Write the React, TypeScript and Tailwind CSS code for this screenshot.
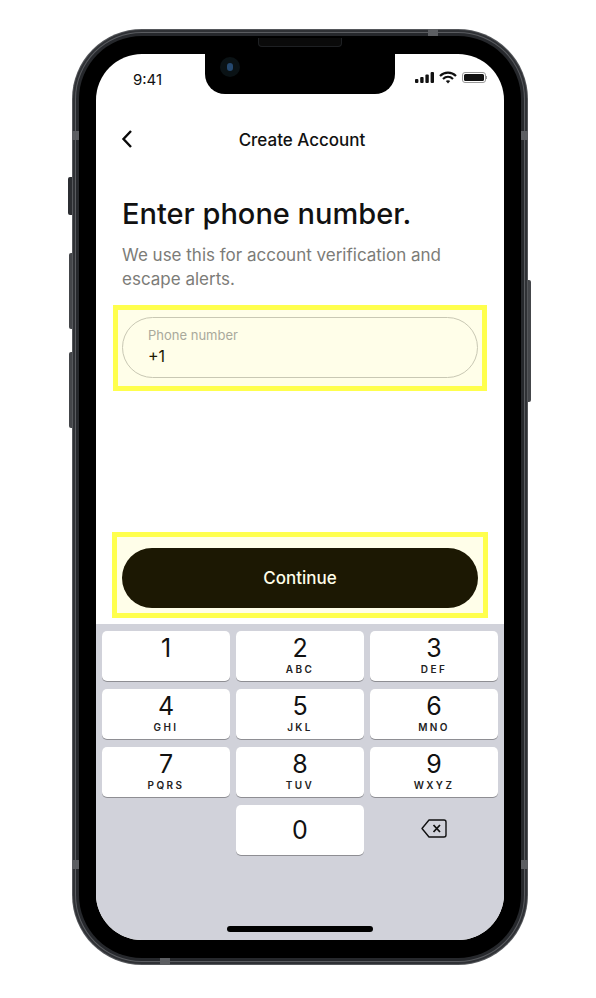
const keys = [
  ['1', ''],
  ['2', 'ABC'],
  ['3', 'DEF'],
  ['4', 'GHI'],
  ['5', 'JKL'],
  ['6', 'MNO'],
  ['7', 'PQRS'],
  ['8', 'TUV'],
  ['9', 'WXYZ'],
];

const Key = ({ digit, letters }: { digit: string; letters: string }) => (
  <div className="h-[50px] rounded-[5px] bg-white shadow-[0_1px_0_#8e8e93] flex flex-col items-center pt-[3px]">
    <span className="text-[25px] leading-[29px] text-[#111]">{digit}</span>
    {letters && (
      <span className="mt-[1px] text-[10px] leading-[11px] font-semibold tracking-[2.4px] text-[#222] font-['Inter',sans-serif]">
        {letters}
      </span>
    )}
  </div>
);

const StatusIcons = () => (
  <svg width="72" height="14" viewBox="0 0 72 14">
    <rect x="0" y="8" width="3.4" height="4" rx="1" fill="#111" />
    <rect x="5.2" y="6" width="3.4" height="6" rx="1" fill="#111" />
    <rect x="10.4" y="3.5" width="3.4" height="8.5" rx="1" fill="#111" />
    <rect x="15.6" y="1" width="3.4" height="11" rx="1" fill="#111" />
    <path d="M25 5 C29.5 0.5 36.5 0.5 41 5 M28 8 C31 5.2 35 5.2 38 8" fill="none" stroke="#111" strokeWidth="2.2" />
    <path d="M30.8 10 C32 8.9 34 8.9 35.2 10 L33 12.4 Z" fill="#111" />
    <rect x="47.5" y="1.5" width="23" height="10" rx="2.5" fill="none" stroke="#999" strokeWidth="1" />
    <rect x="49" y="3" width="20" height="7" rx="1.5" fill="#111" />
    <rect x="71" y="5" width="1" height="3" fill="#999" />
  </svg>
);

export default function App() {
  return (
    <div className="w-[596px] h-[998px] bg-white overflow-hidden pt-[29px] pl-[72px] font-['Inter',sans-serif]">
      <div className="relative w-[456px] h-[936px]">
        {/* side buttons */}
        <div className="absolute left-[-4px] top-[148px] w-[5px] h-[38px] rounded-l-[2px] bg-[#2c2e32]" />
        <div className="absolute left-[-3px] top-[224px] w-[4px] h-[76px] rounded-l-[2px] bg-[#44464a]" />
        <div className="absolute left-[-3px] top-[323px] w-[4px] h-[76px] rounded-l-[2px] bg-[#44464a]" />
        <div className="absolute right-[-3px] top-[251px] w-[4px] h-[122px] rounded-r-[2px] bg-[#44464a]" />

        {/* frame */}
        <div className="relative h-full rounded-[70px] bg-[#55575b] p-[1px]">
          <div className="h-full rounded-[69px] bg-[#2f3135] p-[2px]">
            <div className="h-full rounded-[67px] bg-[#5a5c60] p-[1px]">
              <div className="h-full rounded-[66px] bg-[#26282c] p-[3px]">
                <div className="h-full rounded-[63px] bg-black px-[17px] py-[18px]">
                  {/* screen */}
                  <div className="relative h-full rounded-[46px] overflow-hidden bg-white flex flex-col">
                    {/* notch */}
                    <div className="absolute left-[109px] top-0 w-[190px] h-[40px] bg-black rounded-b-[20px]" />
                    <div className="absolute left-[124px] top-[3px] w-[20px] h-[20px] rounded-full bg-[#0a1215] flex items-center justify-center">
                      <div className="w-[6px] h-[8px] rounded-full bg-[#25486e]" />
                    </div>

                    {/* status bar */}
                    <div className="h-[48px] shrink-0 flex items-start justify-between pl-[37px] pr-[17px] pt-[17px]">
                      <span className="text-[15px] leading-[18px] text-[#111]">9:41</span>
                      <StatusIcons />
                    </div>

                    {/* nav */}
                    <div className="relative h-[74px] shrink-0 flex items-center justify-center pl-[4px] pt-[3px]">
                      <svg
                        className="absolute left-[24px] top-[27px]"
                        width="14"
                        height="20"
                        viewBox="0 0 14 20"
                        fill="none"
                        stroke="#0a0a0a"
                        strokeWidth="2.4"
                      >
                        <path d="M11 2 L3.5 10 L11 18" />
                      </svg>
                      <span className="text-[17px] font-medium text-[#111]">Create Account</span>
                    </div>

                    {/* copy */}
                    <div className="px-[26px] pt-[20px] shrink-0">
                      <h1 className="text-[29px] leading-[36px] font-medium text-[#111]">Enter phone number.</h1>
                      <p className="mt-[11px] text-[17px] leading-[24px] text-[#7c7c78]">
                        We use this for account verification and escape alerts.
                      </p>
                    </div>

                    {/* phone input */}
                    <div className="mx-[17px] mt-[14px] h-[86px] shrink-0 border-[5px] border-[#ffff4d] bg-[#fffee9] px-[4px] pt-[7px]">
                      <div className="h-[61px] rounded-full border border-[#c9c8b4] pl-[25px] pt-[9px]">
                        <div className="text-[13px] leading-[17px] text-[#a9a99c]">Phone number</div>
                        <div className="text-[16px] leading-[22px] mt-[1px] text-[#1c1803]">+1</div>
                      </div>
                    </div>

                    {/* continue */}
                    <div className="mx-[16px] mt-[141px] h-[86px] shrink-0 border-[5px] border-[#ffff4d] bg-[#fffee9] px-[5px] pt-[11px]">
                      <div className="h-[60px] rounded-full bg-[#1c1803] flex items-center justify-center pt-[1px] text-[17px] font-medium text-[#fffee9]">
                        Continue
                      </div>
                    </div>

                    {/* keypad */}
                    <div className="relative mt-[6px] flex-1 bg-[#d1d2da] px-[6px] pt-[7px]">
                      <div className="grid grid-cols-3 gap-x-[6px] gap-y-[8px]">
                        {keys.map(([digit, letters]) => (
                          <Key key={digit} digit={digit} letters={letters} />
                        ))}
                        <div />
                        <div className="h-[50px] rounded-[5px] bg-white shadow-[0_1px_0_#8e8e93] flex items-center justify-center pt-[1px] text-[25px] text-[#111]">
                          0
                        </div>
                        <div className="h-[50px] flex items-center justify-center pb-[4px]">
                          <svg
                            width="26"
                            height="19"
                            viewBox="0 0 26 19"
                            fill="none"
                            stroke="#111"
                            strokeWidth="1.4"
                            strokeLinejoin="round"
                          >
                            <path d="M8 1 H23 A2 2 0 0 1 25 3 V16 A2 2 0 0 1 23 18 H8 L1 9.5 Z" />
                            <path d="M12.5 6 L19 13 M19 6 L12.5 13" strokeWidth="1.8" />
                          </svg>
                        </div>
                      </div>
                      <div className="absolute left-[131px] bottom-[8px] w-[146px] h-[6px] rounded-full bg-black" />
                    </div>
                  </div>
                </div>
              </div>
            </div>
          </div>
        </div>

        {/* speaker */}
        <div className="absolute left-[186px] top-[9px] w-[84px] h-[9px] rounded-b-[4px] bg-[#0a0a0a] border border-t-0 border-[#1e2023]" />

        {/* antenna bands */}
        <div className="absolute left-0 top-[102px] w-[7px] h-[9px] bg-[#5c5e62]" />
        <div className="absolute right-0 top-[102px] w-[7px] h-[9px] bg-[#5c5e62]" />
        <div className="absolute right-0 top-[831px] w-[7px] h-[9px] bg-[#5c5e62]" />
        <div className="absolute left-0 top-[831px] w-[7px] h-[9px] bg-[#5c5e62]" />
        <div className="absolute left-[356px] top-0 w-[10px] h-[7px] bg-[#5c5e62]" />
        <div className="absolute left-[88px] bottom-0 w-[10px] h-[7px] bg-[#5c5e62]" />
      </div>
    </div>
  );
}
